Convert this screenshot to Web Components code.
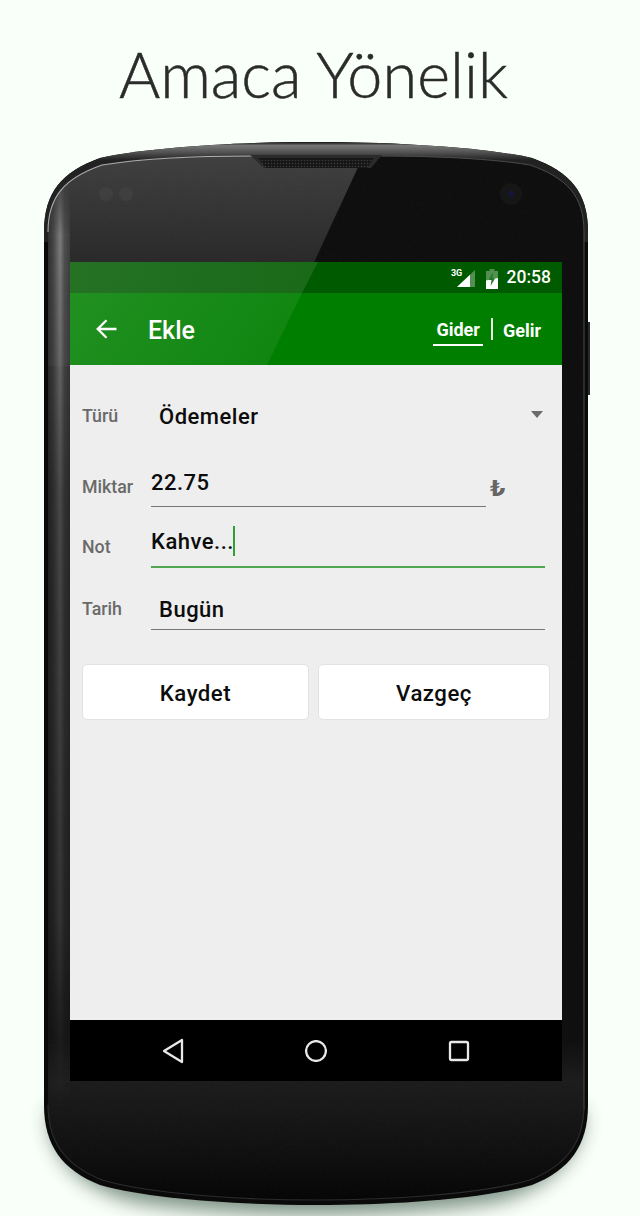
<!DOCTYPE html>
<html lang="tr"><head><meta charset="utf-8"><title>Amaca Yönelik</title>
<style>
html,body{margin:0;padding:0;background:#f9fff9}
body{width:640px;height:1216px;overflow:hidden;font-family:Roboto,"Liberation Sans",sans-serif}
</style></head><body>
<page-title>Amaca Yönelik</page-title>
<phone-frame>
  <status-bar time="20:58"></status-bar>
  <app-bar heading="Ekle"></app-bar>
  <form-screen>
    <form-row label="Türü" value="Ödemeler" kind="select" style="--h:62px;--vpl:8px;--vpb:16px;--lpb:21px;--line:transparent"></form-row>
    <form-row label="Miktar" value="22.75" kind="money" style="--h:60px;--vpb:10px;--lpb:10px;--line:#777"></form-row>
    <form-row label="Not" value="Kahve..." kind="focus" style="--h:61px;--vpb:11px;--lpb:11px;--line:#4fa552;--lw:2px"></form-row>
    <form-row label="Tarih" value="Bugün" style="--h:62px;--vpl:8px;--vpb:6px;--lpb:11px;--line:#777"></form-row>
    <button-row><form-button style="--w:227px">Kaydet</form-button><form-button style="--w:232px">Vazgeç</form-button></button-row>
  </form-screen>
  <nav-bar></nav-bar>
</phone-frame>
<script>
const def=(name,html)=>customElements.define(name,class extends HTMLElement{
  constructor(){super();this.attachShadow({mode:'open'});}
  connectedCallback(){this.shadowRoot.innerHTML=typeof html==='function'?html(this):html;}
});
def('page-title',`<style>:host{display:block;height:130px;box-sizing:border-box;padding:30px 13px 0 0;text-align:center;
 font:300 63px/88px "Lato",sans-serif;color:#2b2b2b;-webkit-text-stroke:.5px #2b2b2b;}</style><slot></slot>`);
def('phone-frame',`<style>
:host{display:block;position:relative;width:640px;height:1086px}
svg{position:absolute;left:0;top:0}
.screen{position:relative;margin-left:70px;width:492px;height:819px;top:132px;display:flex;flex-direction:column;background:#eee}
</style>
<svg width="640" height="1086" viewBox="0 130 640 1086" aria-hidden="true">
<defs>
<path id="o" d="M44 232C44 192 62 172 100 158C150 147 240 142 316 142C392 142 482 147 532 158C570 172 588 192 588 232V1105C588 1145 570 1170 532 1185C482 1199 392 1205 316 1205C240 1205 150 1199 100 1185C62 1170 44 1145 44 1105Z"/>
<path id="f" d="M48 232C48 196 65 178 102 165C150 157 220 156 316 156C412 156 482 157 530 165C567 178 584 196 584 232V1105C584 1142 567 1165 530 1180C482 1194 392 1200 316 1200C240 1200 150 1194 102 1180C65 1165 48 1142 48 1105Z"/>
<clipPath id="fc"><use href="#f"/></clipPath>
<clipPath id="oc"><use href="#o"/></clipPath>
<filter id="b" x="-20%" y="-40%" width="140%" height="180%"><feGaussianBlur stdDeviation="10"/></filter>
<filter id="b2"><feGaussianBlur stdDeviation=".5"/></filter>
<filter id="n" x="0" y="0" width="100%" height="100%"><feTurbulence type="fractalNoise" baseFrequency="1.1" numOctaves="2" seed="4"/><feColorMatrix values="0 0 0 0 1 0 0 0 0 1 0 0 0 0 1 0 0 0 .035 0"/></filter>
<linearGradient id="ref" x1="0" y1="156" x2="0" y2="262" gradientUnits="userSpaceOnUse"><stop offset="0" stop-color="#3d3d3d"/><stop offset="1" stop-color="#262626"/></linearGradient>
<linearGradient id="low" x1="0" y1="1040" x2="0" y2="1200" gradientUnits="userSpaceOnUse"><stop offset="0" stop-color="#0b0b0b"/><stop offset=".26" stop-color="#191919"/><stop offset=".65" stop-color="#0e0e0e"/><stop offset="1" stop-color="#020202"/></linearGradient>
<linearGradient id="strip" x1="48" x2="70" y1="0" y2="0" gradientUnits="userSpaceOnUse"><stop offset="0" stop-color="#2c2c2c"/><stop offset=".25" stop-color="#444"/><stop offset=".55" stop-color="#7a7a7a"/><stop offset=".75" stop-color="#4c4c4c"/><stop offset="1" stop-color="#3a3a3a"/></linearGradient>
<linearGradient id="stripMask" x1="0" x2="0" y1="170" y2="1110" gradientUnits="userSpaceOnUse"><stop offset="0" stop-color="#000"/><stop offset=".07" stop-color="#fff"/><stop offset=".35" stop-color="#888"/><stop offset=".8" stop-color="#555"/><stop offset="1" stop-color="#000"/></linearGradient>
<mask id="sm" maskUnits="userSpaceOnUse" x="40" y="160" width="40" height="990"><rect x="40" y="160" width="40" height="990" fill="url(#stripMask)"/></mask>
<pattern id="gr" width="3" height="3" patternUnits="userSpaceOnUse"><rect width="3" height="3" fill="#161616"/><circle cx="1.5" cy="1.5" r=".8" fill="#3a3a3a"/></pattern>
<linearGradient id="rim" x1="0" y1="142" x2="0" y2="160" gradientUnits="userSpaceOnUse"><stop offset="0" stop-color="#111"/><stop offset=".2" stop-color="#777"/><stop offset=".55" stop-color="#555"/><stop offset="1" stop-color="#222"/></linearGradient>
</defs>
<path d="M50 1120C60 1160 90 1180 130 1192C230 1210 400 1210 500 1192C540 1180 570 1160 582 1120V1100H50Z" fill="#2c4a38" opacity=".62" transform="translate(0 9)" filter="url(#b)"/>
<use href="#o" fill="#0a0a0a"/>
<g clip-path="url(#oc)"><rect x="40" y="142" width="560" height="100" fill="url(#rim)"/></g>
<use href="#f" fill="#0b0b0b"/>
<g clip-path="url(#fc)">
  <polygon points="40,150 366,150 266,366 40,366" fill="url(#ref)"/>
  <rect x="40" y="1040" width="560" height="166" fill="url(#low)"/>
  <rect x="44" y="160" width="26" height="990" fill="url(#strip)" mask="url(#sm)"/>
  <rect x="40" y="150" width="560" height="1060" filter="url(#n)"/>
  <circle cx="106" cy="194" r="7" fill="#4c4c4c" opacity=".35"/>
  <circle cx="126" cy="194" r="7" fill="#4c4c4c" opacity=".35"/>
  <circle cx="511" cy="194" r="11" fill="#161616"/>
  <circle cx="511" cy="194" r="3" fill="#15153c"/>
</g>
<path d="M48 232C48 196 65 178 102 165C150 157 220 156 256 156" fill="none" stroke="#d8d8d8" stroke-opacity=".75" stroke-width="1.1" filter="url(#b2)"/>
<path d="M378 156C412 156 482 157 530 165C567 178 584 196 584 232V1110" fill="none" stroke="#4a4a4a" stroke-width="1"/>
<path d="M48 1105C48 1142 65 1165 102 1180C150 1194 240 1200 316 1200C392 1200 482 1194 530 1180C567 1165 584 1142 584 1105" fill="none" stroke="#2c2c2c" stroke-width="1.2"/>
<polygon points="250,155 382,155 371,168 264,168" fill="#2b2b2b"/>
<polygon points="258,158 374,158 367,168 266,168" fill="url(#gr)"/>
<rect x="588" y="322" width="2" height="73" fill="#2a2a2a"/>
</svg>
<div class="screen"><slot></slot></div>`);
def('status-bar',el=>`<style>
:host{display:flex;align-items:center;justify-content:flex-end;height:31px;box-sizing:border-box;padding-right:11px;position:relative;background:#005a00;color:#fff;flex:none}
:host::before{content:"";position:absolute;inset:0;background:linear-gradient(100deg,#257225,#0d610d);clip-path:polygon(0 0,248px 0,232px 31px,0 31px)}
.g{position:absolute;left:381px;top:7px;font:700 9px/9px Roboto,sans-serif;letter-spacing:-.2px}
svg{display:block;position:relative}
.t{font:500 17.500px/31px Roboto,sans-serif;margin-left:9px;position:relative}
</style><span class="g">3G</span>
<svg width="18" height="18" viewBox="0 0 18 18" style="margin-top:3px"><path d="M0 17 18 0V17Z" fill="#fff" fill-opacity=".32"/><path d="M0 17 13 4.700V17Z" fill="#fff"/></svg>
<svg width="12" height="20" viewBox="0 0 12 20" style="margin-left:11px;margin-top:2px"><path d="M3.500 0h5v2H12v18H0V2h3.500z" fill="#fff" fill-opacity=".32"/><path d="M0 11.500 12 9v11H0z" fill="#fff"/><path d="M7 3 2.800 11h2.700L4.600 17 9 9.500H6.300z" fill="#1e7a1e"/></svg>
<span class="t">${el.getAttribute('time')}</span>`);
def('app-bar',el=>`<style>
:host{display:flex;align-items:center;height:72px;box-sizing:border-box;position:relative;background:#007e00;color:#fff;padding-left:26px;flex:none}
:host::before{content:"";position:absolute;inset:0;background:linear-gradient(125deg,#219021,#078107 70%);clip-path:polygon(0 0,232px 0,197px 72px,0 72px)}
svg{display:block;position:relative}
h1{margin:3px 0 0 31px;font:500 25px/32px Roboto,sans-serif;position:relative;flex:1}
.tabs{display:flex;align-items:center;position:relative;font:700 18px/24px Roboto,sans-serif;padding-right:21px;margin-top:4px}
.on{padding:0 3px 2px;border-bottom:2px solid #fff;margin-top:2px}
.div{width:2px;height:22px;background:#fff;opacity:.9;margin:-5px 10px 0 8px}
</style>
<svg width="21" height="20" viewBox="0 0 21 20"><path d="M20.500 10H2M10.500 1.200 1.700 10l8.800 8.800" fill="none" stroke="#fff" stroke-width="2.300"/></svg>
<h1>${el.getAttribute('heading')}</h1>
<div class="tabs"><span class="on">Gider</span><span class="div"></span><span class="off">Gelir</span></div>`);
def('form-screen',`<style>:host{display:flex;flex-direction:column;flex:1;box-sizing:border-box;padding:20px 12px 0 12px;background:#eee;min-height:0}</style><slot></slot>`);
def('form-row',el=>{
 const k=el.getAttribute('kind')||'';
 return `<style>
:host{display:grid;grid-template-columns:69px 1fr;height:var(--h);align-items:end;position:relative;margin-right:5px}
.l{font:500 17.800px/20px Roboto,sans-serif;color:#6a6a6a;padding-bottom:var(--lpb);white-space:nowrap}
.f{display:flex;align-items:flex-end;height:100%;box-sizing:border-box;position:relative;color:#0c0c0c}
.b{flex:1;height:100%;box-sizing:border-box;display:flex;align-items:flex-end;border-bottom:var(--lw,1px) solid var(--line);padding:0 0 var(--vpb) var(--vpl,0)}
.v{font:500 22px/26px Roboto,sans-serif;letter-spacing:.5px;position:relative;white-space:nowrap}
.tl{width:59px;flex:none;font:700 22px/24px "DejaVu Sans",sans-serif;color:#666;padding:0 0 6px 4px;box-sizing:border-box}
.caret{position:absolute;left:380px;top:26px;width:0;height:0;border:6.500px solid transparent;border-top:7px solid #6b6b6b;border-bottom:0}
.cur{position:absolute;right:-1px;top:-3px;width:2px;height:30px;background:#2fa034}
</style><div class="l">${el.getAttribute('label')}</div>
<div class="f"><div class="b"><span class="v">${el.getAttribute('value')}${k==='focus'?'<i class="cur"></i>':''}</span></div>${k==='money'?'<span class="tl">₺</span>':''}${k==='select'?'<i class="caret"></i>':''}</div>`});
def('button-row',`<style>:host{display:flex;gap:9px;margin-top:34px}</style><slot></slot>`);
def('form-button',`<style>:host{display:flex;flex:none;align-items:center;justify-content:center;width:var(--w);height:56px;box-sizing:border-box;padding-top:2px;background:#fff;border:1px solid #e2e2e2;border-radius:5px;font:500 22.200px/26px Roboto,sans-serif;letter-spacing:.5px;color:#0c0c0c}</style><slot></slot>`);
def('nav-bar',`<style>:host{display:flex;align-items:center;gap:121px;height:61px;box-sizing:border-box;padding:0 0 0 92px;background:#000;flex:none}svg{display:block}</style>
<svg width="22" height="26" viewBox="0 0 22 26"><path d="M20 2 2 13l18 11z" fill="none" stroke="#e8e8e8" stroke-width="2.300" stroke-linejoin="round"/></svg>
<svg width="22" height="22" viewBox="0 0 22 22"><circle cx="11" cy="11" r="9.900" fill="none" stroke="#e8e8e8" stroke-width="2.300"/></svg>
<svg width="22" height="22" viewBox="0 0 22 22"><rect x="2" y="2" width="18" height="18" rx="1.500" fill="none" stroke="#e8e8e8" stroke-width="2.300"/></svg>`);
</script>
</body></html>
